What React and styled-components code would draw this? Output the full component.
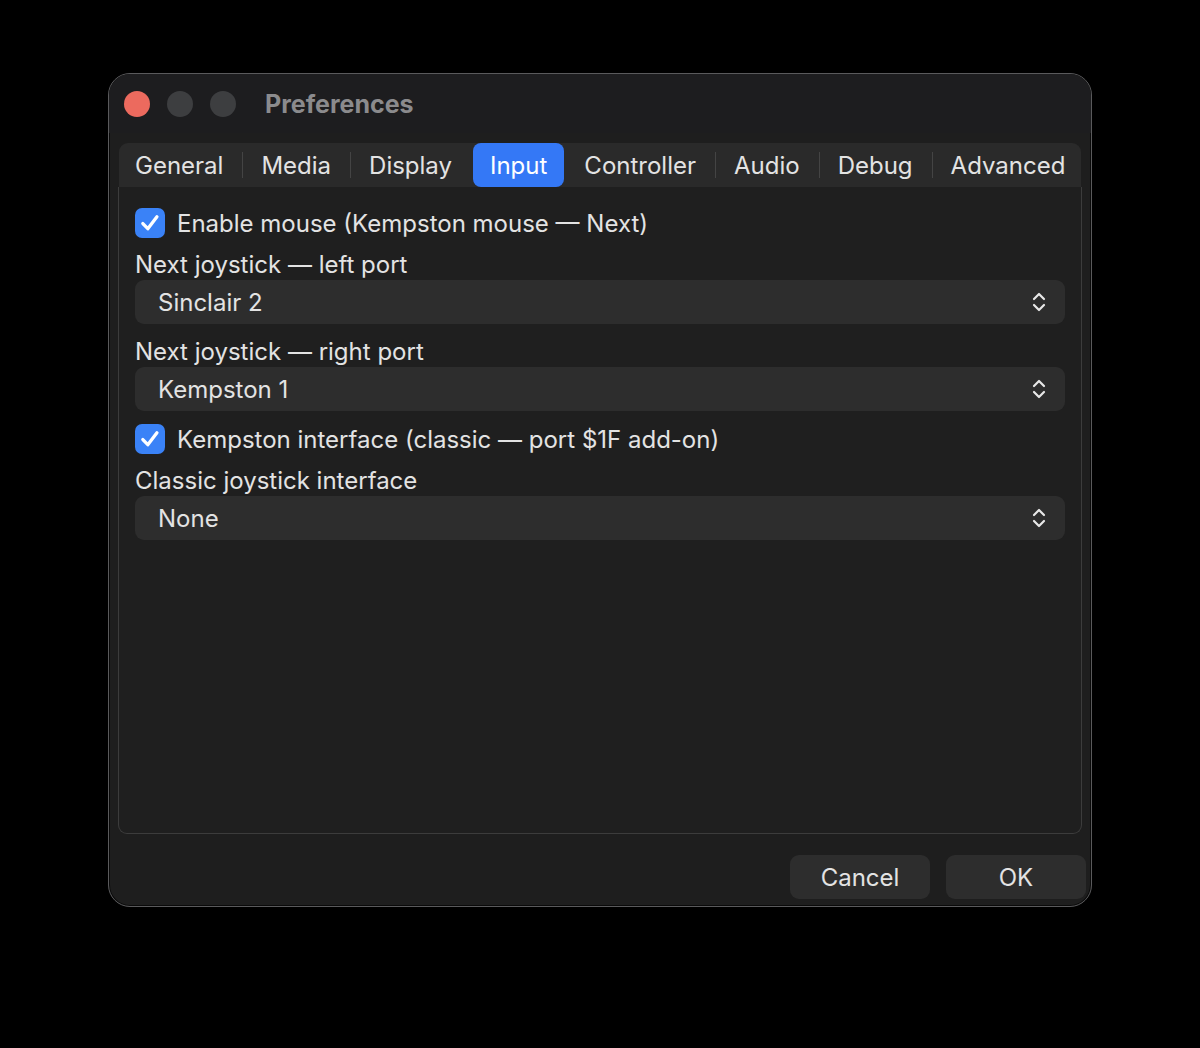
import React, { useState } from 'react';
import styled, { createGlobalStyle } from 'styled-components';

const GlobalStyle = createGlobalStyle`
  html, body {
    margin: 0;
    padding: 0;
    background: #000000;
  }
  body {
    font-family: Inter, "Noto Sans", "Liberation Sans", sans-serif;
    -webkit-font-smoothing: antialiased;
  }
`;

const Page = styled.div`
  width: 1200px;
  height: 1048px;
  padding: 73px 0 0 108px;
  box-sizing: border-box;
  background: #000000;
`;

const Window = styled.div`
  width: 984px;
  height: 834px;
  box-sizing: border-box;
  border: 1px solid #5a5a5c;
  border-radius: 22px;
  background: #1e1e1e;
  overflow: hidden;
  display: flex;
  flex-direction: column;
  box-shadow: inset 0 0 0 1px #0a0a0a;
`;

const TitleBar = styled.div`
  height: 59px;
  flex-shrink: 0;
  display: flex;
  align-items: center;
  padding-left: 15px;
  background: #1d1d1f;
`;

const Light = styled.span`
  width: 26px;
  height: 26px;
  border-radius: 50%;
  margin-right: 17px;
  background: ${(p) => p.color};
  flex-shrink: 0;
`;

const Title = styled.div`
  margin-left: 12px;
  font-size: 25px;
  font-weight: 700;
  color: #8b8b8d;
`;

const Body = styled.div`
  flex: 1;
  display: flex;
  flex-direction: column;
  padding: 10px 5px 6px 10px;
`;

const TabBar = styled.div`
  height: 44px;
  width: 962px;
  flex-shrink: 0;
  display: flex;
  align-items: center;
  background: #2a2a2a;
  border-radius: 9px 9px 0 0;
  box-sizing: border-box;
`;

const Tab = styled.button`
  height: 44px;
  border: none;
  background: ${(p) => (p.active ? '#3478f6' : 'transparent')};
  color: ${(p) => (p.active ? '#ffffff' : '#e3e3e3')};
  border-radius: 8px;
  font-family: inherit;
  font-size: 24px;
  padding: 0 ${(p) => p.pr}px 0 ${(p) => p.pl}px;
  margin: 0 ${(p) => (p.active ? 2 : 0)}px;
  cursor: pointer;
  white-space: nowrap;
`;

const Sep = styled.span`
  width: 1px;
  height: 26px;
  background: ${(p) => (p.hidden ? 'transparent' : '#444444')};
  flex-shrink: 0;
`;

const Panel = styled.div`
  width: 964px;
  height: 647px;
  margin-left: -1px;
  box-sizing: border-box;
  border: 1px solid #3c3c3c;
  border-top: none;
  border-radius: 0 0 9px 9px;
  background: #1f1f1f;
  padding: 21px 16px 0 16px;
  display: flex;
  flex-direction: column;
`;

const CheckRow = styled.label`
  display: flex;
  align-items: center;
  gap: 12px;
  height: 30px;
  color: #e3e3e3;
  font-size: 24px;
  cursor: pointer;
  margin-bottom: ${(p) => p.mb || 0}px;
`;

const Box = styled.span`
  width: 30px;
  height: 30px;
  border-radius: 7px;
  background: ${(p) => (p.checked ? '#3a82f7' : '#3a3a3a')};
  display: flex;
  align-items: center;
  justify-content: center;
  flex-shrink: 0;
`;

const FieldLabel = styled.div`
  font-size: 24px;
  color: #e3e3e3;
  height: 30px;
  line-height: 30px;
`;

const Select = styled.div`
  height: 44px;
  width: 930px;
  box-sizing: border-box;
  background: #2d2d2d;
  border-radius: 9px;
  display: flex;
  align-items: center;
  justify-content: space-between;
  padding: 0 18px 0 23px;
  font-size: 24px;
  color: #e3e3e3;
  margin-bottom: ${(p) => p.mb || 0}px;
`;

const Footer = styled.div`
  display: flex;
  justify-content: flex-end;
  gap: 16px;
  margin-top: 21px;
`;

const Button = styled.button`
  width: 140px;
  height: 44px;
  border: none;
  border-radius: 9px;
  background: #2d2d2d;
  color: #e3e3e3;
  font-family: inherit;
  font-size: 24px;
  cursor: pointer;
`;

const Check = () => (
  <svg width="22" height="22" viewBox="0 0 20 20">
    <path d="M3.5 10.5 L8 15.2 L16.3 4.3" fill="none" stroke="#ffffff" strokeWidth="3" strokeLinecap="round" strokeLinejoin="round" />
  </svg>
);

const Chevrons = () => (
  <svg width="16" height="22" viewBox="0 0 16 22">
    <path d="M3 8 L8 3 L13 8" fill="none" stroke="#e8e8e8" strokeWidth="2.2" strokeLinecap="round" strokeLinejoin="round" />
    <path d="M3 14 L8 19 L13 14" fill="none" stroke="#e8e8e8" strokeWidth="2.2" strokeLinecap="round" strokeLinejoin="round" />
  </svg>
);

const tabs = ['General', 'Media', 'Display', 'Input', 'Controller', 'Audio', 'Debug', 'Advanced'];

const App = () => {
  const [active, setActive] = useState('Input');
  const [mouse, setMouse] = useState(true);
  const [kempston, setKempston] = useState(true);
  const activeIdx = tabs.indexOf(active);

  return (
    <>
      <GlobalStyle />
      <Page>
        <Window>
          <TitleBar>
            <Light color="#ec6a5e" />
            <Light color="#3d3e40" />
            <Light color="#3d3e40" />
            <Title>Preferences</Title>
          </TitleBar>
          <Body>
            <TabBar>
              {tabs.map((name, i) => {
                const isActive = name === active;
                return (
                  <React.Fragment key={name}>
                    {i > 0 && !isActive && i - 1 !== activeIdx && <Sep />}
                    <Tab
                      active={isActive}
                      pl={isActive ? 17 : i === 0 ? 16 : i - 1 === activeIdx ? 18 : 18}
                      pr={isActive ? 17 : 19}
                      onClick={() => setActive(name)}
                    >
                      {name}
                    </Tab>
                  </React.Fragment>
                );
              })}
            </TabBar>
            <Panel>
              <CheckRow mb={12} onClick={() => setMouse(!mouse)}>
                <Box checked={mouse}>{mouse && <Check />}</Box>
                Enable mouse (Kempston mouse — Next)
              </CheckRow>
              <FieldLabel>Next joystick — left port</FieldLabel>
              <Select mb={13}>
                Sinclair 2
                <Chevrons />
              </Select>
              <FieldLabel>Next joystick — right port</FieldLabel>
              <Select mb={13}>
                Kempston 1
                <Chevrons />
              </Select>
              <CheckRow mb={12} onClick={() => setKempston(!kempston)}>
                <Box checked={kempston}>{kempston && <Check />}</Box>
                Kempston interface (classic — port $1F add-on)
              </CheckRow>
              <FieldLabel>Classic joystick interface</FieldLabel>
              <Select>
                None
                <Chevrons />
              </Select>
            </Panel>
            <Footer>
              <Button>Cancel</Button>
              <Button>OK</Button>
            </Footer>
          </Body>
        </Window>
      </Page>
    </>
  );
};

export default App;
